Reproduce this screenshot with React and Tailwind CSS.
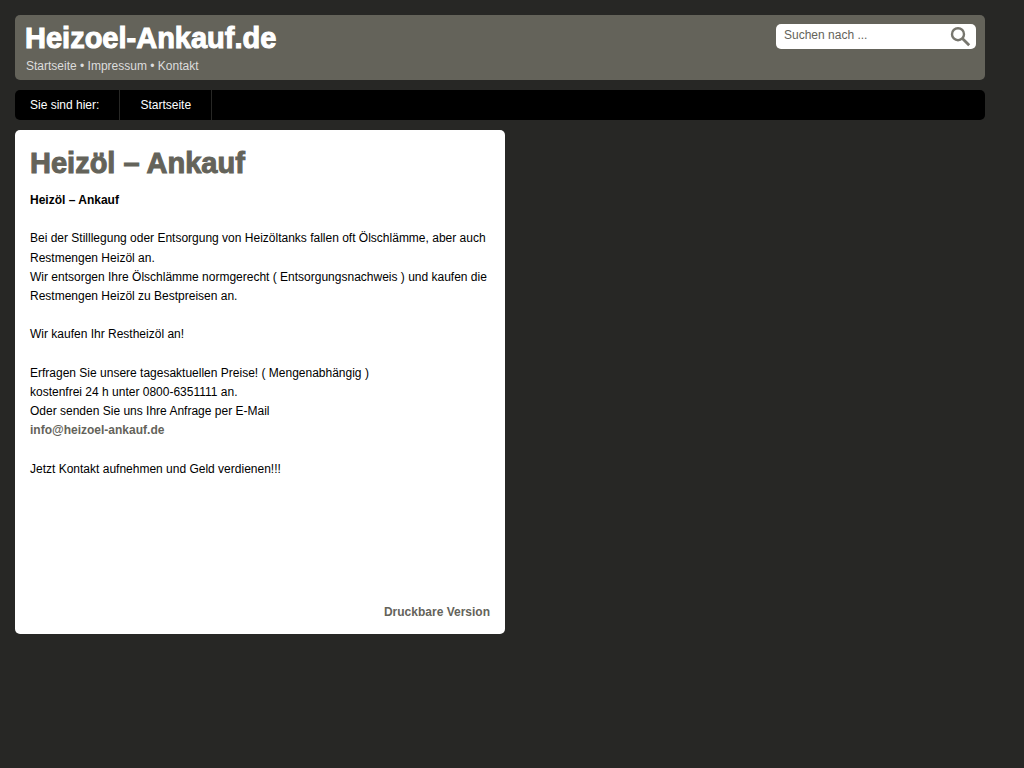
import React, { useState } from "react";

const metaLinks = [
  { label: "Startseite", href: "#startseite" },
  { label: "Impressum", href: "#impressum" },
  { label: "Kontakt", href: "#kontakt" },
];

const SearchBox = () => {
  const [query, setQuery] = useState("");

  return (
    <form
      role="search"
      onSubmit={(e) => e.preventDefault()}
      className="flex h-[25px] w-[200px] items-center rounded-[5px] bg-white pl-2 pr-1"
    >
      <input
        type="text"
        aria-label="Suchen nach"
        placeholder="Suchen nach ..."
        value={query}
        onChange={(e) => setQuery(e.target.value)}
        className="h-[22px] min-w-0 flex-1 self-start text-xs text-[#64635a] outline-none placeholder:text-[#64635a]"
      />
      <button type="submit" aria-label="Suchen" className="shrink-0">
        <svg width="22" height="22" viewBox="0 0 22 22" fill="none" stroke="#77766e">
          <circle cx="8" cy="8.2" r="6" strokeWidth="2.4" />
          <path d="M12.4 12.4L19.2 19.2" strokeWidth="2.8" />
        </svg>
      </button>
    </form>
  );
};

const App = () => {
  return (
    <div className="min-h-screen bg-[#272725] p-[15px] font-['Liberation_Sans',Arial,sans-serif] text-xs text-black">
      <div className="max-w-[970px]">
        {/* Header */}
        <header className="mb-[10px] flex items-start justify-between rounded-[5px] bg-[#64635a] pb-1 pl-[10px] pr-[9px] pt-[9px]">
          <div>
            <h1 className="text-[29px] font-bold leading-7 text-white [-webkit-text-stroke:1px]">
              <a href="#startseite">Heizoel-Ankauf.de</a>
            </h1>
            <nav className="mt-1 pl-px leading-5 text-[#dddddd]">
              {metaLinks.map((link, i) => (
                <React.Fragment key={link.label}>
                  {i > 0 && " • "}
                  <a href={link.href}>{link.label}</a>
                </React.Fragment>
              ))}
            </nav>
          </div>
          <SearchBox />
        </header>

        {/* Breadcrumb */}
        <nav className="mb-[10px] flex rounded-[5px] bg-black leading-[30px] text-white">
          <span className="border-r border-[#272725] pl-[15px] pr-5">Sie sind hier:</span>
          <a href="#startseite" className="border-r border-[#272725] px-5">
            Startseite
          </a>
        </nav>

        {/* Content */}
        <main className="max-w-[490px] rounded-[5px] bg-white px-[15px] pb-3 pt-[15px] leading-[1.6]">
          <h2 className="mb-[10px] text-[29px] font-bold leading-9 text-[#64635a] [-webkit-text-stroke:1px]">
            Heizöl – Ankauf
          </h2>
          <p className="mb-[1.6em] font-bold">Heizöl – Ankauf</p>
          <p className="mb-[1.6em]">
            Bei der Stilllegung oder Entsorgung von Heizöltanks fallen oft Ölschlämme, aber auch
            Restmengen Heizöl an.
            <br />
            Wir entsorgen Ihre Ölschlämme normgerecht ( Entsorgungsnachweis ) und kaufen die
            Restmengen Heizöl zu Bestpreisen an.
          </p>
          <p className="mb-[1.6em]">Wir kaufen Ihr Restheizöl an!</p>
          <p className="mb-[1.6em]">
            Erfragen Sie unsere tagesaktuellen Preise! ( Mengenabhängig )
            <br />
            kostenfrei 24 h unter 0800-6351111 an.
            <br />
            Oder senden Sie uns Ihre Anfrage per E-Mail
            <br />
            <a href="mailto:info@heizoel-ankauf.de" className="font-bold text-[#64635a]">
              info@heizoel-ankauf.de
            </a>
          </p>
          <p>Jetzt Kontakt aufnehmen und Geld verdienen!!!</p>
          <div className="mt-[124px] text-right">
            <a href="#drucken" className="font-bold text-[#64635a]">
              Druckbare Version
            </a>
          </div>
        </main>
      </div>
    </div>
  );
};

export default App;
